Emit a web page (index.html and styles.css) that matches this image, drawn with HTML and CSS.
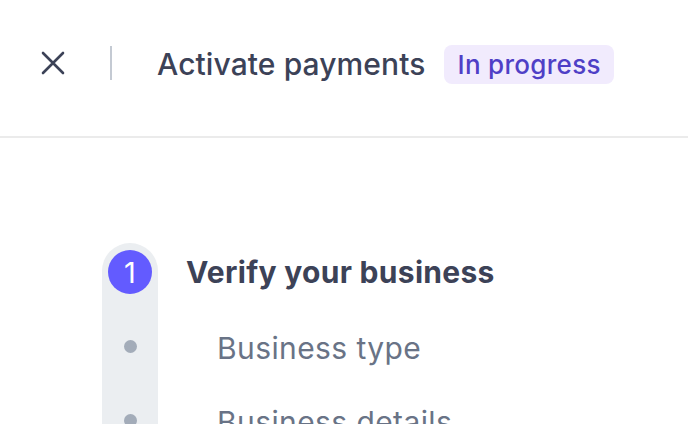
FILE: index.html
```html
<!DOCTYPE html>
<html>
<head>
<meta charset="utf-8">
<link rel="stylesheet" href="styles.css">
</head>
<body>
<header class="topbar">
  <button class="close" aria-label="Close">
    <svg width="24" height="24" viewBox="0 0 24 24"><path d="M2 2 L22 22 M22 2 L2 22" stroke="#3c4257" stroke-width="2.6" stroke-linecap="round" fill="none"/></svg>
  </button>
  <span class="divider"></span>
  <h1 class="title">Activate payments</h1>
  <span class="badge">In progress</span>
</header>
<main class="content">
  <ol class="steps">
    <li class="row row-head">
      <div class="rail rail-top"><span class="num">1</span></div>
      <span class="step-title">Verify your business</span>
    </li>
    <li class="row">
      <div class="rail"><span class="dot"></span></div>
      <span class="sub">Business type</span>
    </li>
    <li class="row">
      <div class="rail"><span class="dot"></span></div>
      <span class="sub">Business details</span>
    </li>
  </ol>
</main>
</body>
</html>
```
FILE: styles.css
```css
* { box-sizing: border-box; }
html, body { margin: 0; padding: 0; background: #fff; }
body {
  font-family: Inter, "Noto Sans", sans-serif;
  width: 688px;
  height: 424px;
  overflow: hidden;
}
.topbar {
  height: 138px;
  border-bottom: 2px solid #ebebeb;
  display: flex;
  align-items: center;
  padding: 0 0 10px 41px;
}
.close {
  border: 0;
  background: none;
  padding: 0;
  width: 24px;
  height: 24px;
  display: flex;
}
.divider {
  width: 2px;
  height: 34px;
  background: #c4cad3;
  margin-left: 45px;
}
.title {
  margin: 0 0 0 45px;
  font-size: 30px;
  font-weight: 500;
  color: #3c4257;
  letter-spacing: 0.1px;
  line-height: 40px;
  padding-top: 2px;
}
.badge {
  margin-left: 18px;
  margin-top: 2px;
  background: #f1ebfd;
  color: #4f3fc6;
  font-size: 26px;
  font-weight: 500;
  letter-spacing: 0.3px;
  border-radius: 8px;
  padding: 5px 13px 5px 14px;
  line-height: 29px;
}
.content { padding-top: 105px; }
.steps {
  list-style: none;
  margin: 0;
  padding: 0 0 0 102px;
}
.row {
  display: flex;
  align-items: center;
  height: 74px;
}
.row-head { height: 66px; align-items: flex-start; }
.rail {
  width: 56px;
  height: 100%;
  background: #ebeef1;
  display: flex;
  align-items: center;
  justify-content: center;
}
.rail-top {
  border-radius: 28px 28px 0 0;
  align-items: flex-start;
  padding-top: 7px;
}
.num {
  width: 44px;
  height: 44px;
  border-radius: 50%;
  background: #635bff;
  color: #fff;
  font-size: 29px;
  font-weight: 400;
  display: flex;
  align-items: center;
  justify-content: center;
}
.step-title {
  margin-left: 28px;
  margin-top: 7px;
  line-height: 44px;
  font-size: 30px;
  font-weight: 700;
  letter-spacing: 0.3px;
  color: #3c4257;
}
.dot {
  width: 13px;
  height: 13px;
  border-radius: 50%;
  background: #a3acb9;
}
.sub {
  margin-left: 59px;
  padding-top: 4px;
  font-size: 30px;
  letter-spacing: 0.4px;
  color: #697386;
}
```
